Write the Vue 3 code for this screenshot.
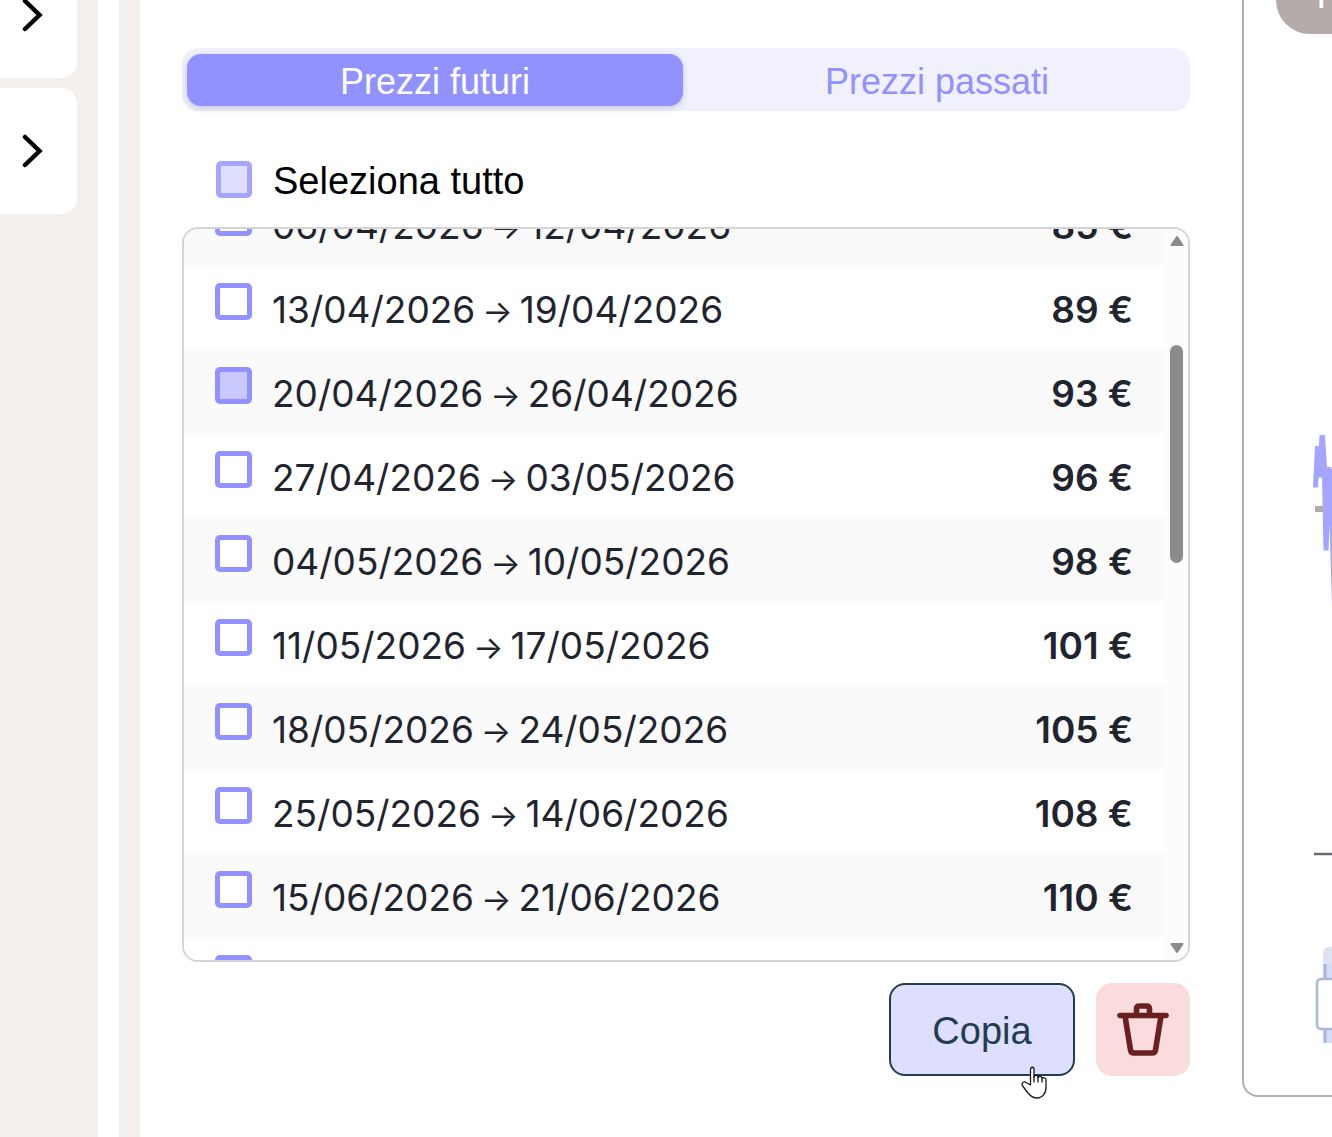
<script setup>
import { onMounted, ref } from 'vue'

const scroller = ref(null)
const rows = ref([
  { from: '06/04/2026', to: '12/04/2026', price: 85, picked: false },
  { from: '13/04/2026', to: '19/04/2026', price: 89, picked: false },
  { from: '20/04/2026', to: '26/04/2026', price: 93, picked: true },
  { from: '27/04/2026', to: '03/05/2026', price: 96, picked: false },
  { from: '04/05/2026', to: '10/05/2026', price: 98, picked: false },
  { from: '11/05/2026', to: '17/05/2026', price: 101, picked: false },
  { from: '18/05/2026', to: '24/05/2026', price: 105, picked: false },
  { from: '25/05/2026', to: '14/06/2026', price: 108, picked: false },
  { from: '15/06/2026', to: '21/06/2026', price: 110, picked: false },
  { from: '22/06/2026', to: '28/06/2026', price: 112, picked: false },
])

onMounted(() => {
  scroller.value.scrollTop = 48
})
</script>

<template>
  <div class="page">
    <nav class="sidebar" aria-label="Sezioni">
      <button v-for="n in 2" :key="n" class="side-card" type="button" aria-label="Apri">
        <svg width="22" height="34" viewBox="0 0 22 34" fill="none" stroke="#000" stroke-width="4.500" stroke-linecap="round">
          <path d="M3 3 L17.500 17 L3 31" />
        </svg>
      </button>
    </nav>
    <div class="rail"></div>

    <main class="main">
      <div class="tabs" role="tablist">
        <button class="tab active" type="button" role="tab" aria-selected="true">Prezzi futuri</button>
        <button class="tab" type="button" role="tab" aria-selected="false">Prezzi passati</button>
      </div>

      <label class="select-all">
        <input class="box soft" type="checkbox" />
        <span>Seleziona tutto</span>
      </label>

      <div class="list">
        <div ref="scroller" class="scroller">
          <table class="prices">
            <tbody>
              <tr v-for="(row, i) in rows" :key="row.from">
                <td class="pick">
                  <input :id="`week-${i}`" v-model="row.picked" class="box" type="checkbox" />
                </td>
                <td>
                  <label class="week" :for="`week-${i}`">
                    <span>{{ row.from }}</span>
                    <span class="arrow">→</span>
                    <span>{{ row.to }}</span>
                  </label>
                </td>
                <td class="price">{{ row.price }} €</td>
              </tr>
            </tbody>
          </table>
        </div>
        <div class="scrollbar" aria-hidden="true">
          <svg width="16" height="12" viewBox="0 0 16 12"><path d="M8 2 L13.500 10 H2.500 Z" fill="#8b8b8b" stroke="#8b8b8b" stroke-width="2" stroke-linejoin="round" /></svg>
          <div class="track"><div class="thumb"></div></div>
          <svg width="16" height="12" viewBox="0 0 16 12"><path d="M8 10 L13.500 2 H2.500 Z" fill="#8b8b8b" stroke="#8b8b8b" stroke-width="2" stroke-linejoin="round" /></svg>
        </div>
      </div>

      <div class="actions">
        <button class="copy" type="button">
          Copia
          <svg class="pointer" width="26" height="34" viewBox="0 0 26 34" fill="#fff" stroke="#15151f" stroke-width="1.300" stroke-linejoin="round" stroke-linecap="round">
            <path d="M9.500 19 V3.500 C9.500 .5 13 .5 13 3.500 V11 C14 8.500 17 9 17 11.500 C18 9.500 21 10 21 12.500 C22 11 25 11.500 25 14 V21 C25 28 21 32 16 32 C12 32 9.500 30 7 27 L2 20.500 C-.5 17 3 15 5 16.500 Z" />
            <path d="M13 11 V16 M17 11.500 V16 M21 12.500 V16" fill="none" />
          </svg>
        </button>
        <button class="delete" type="button" aria-label="Elimina">
          <svg width="54" height="54" viewBox="0 0 54 54" fill="none" stroke="#6b2020" stroke-width="5.600" stroke-linecap="round" stroke-linejoin="round">
            <path d="M4 12.500 H50" />
            <path d="M20.500 12.500 V6 Q20.500 3 23.500 3 H30.500 Q33.500 3 33.500 6 V12.500" />
            <path d="M9 13 L14.500 47 Q15 50 18 50 H36 Q39 50 39.500 47 L45 13" />
          </svg>
        </button>
      </div>
    </main>

    <aside class="chart-card">
      <div class="badge">I</div>
      <svg class="chart" width="88" height="660" viewBox="0 0 88 660" fill="none" aria-hidden="true">
        <path d="M71 109 H88" stroke="#b3aba8" stroke-width="6" />
        <path d="M69 87.500 L71 46 H75 L75.500 35 H81 L83 67 H87 L88 70 V206 L85.500 124 L84.500 150.500 H79.500 L78 77.500 H74.500 L74 87.500 Z" fill="#a5a4ff" />
        <path d="M70 454 H88" stroke="#6c6a75" stroke-width="2.500" />
        <path d="M79 564 V553 Q79 547 85 547 H88 V564 Z" fill="#dde3f2" />
        <path d="M79 564 H88 V643 H79 Z" fill="#d3ddf8" />
        <path d="M81 564 V643" stroke="#a9b8d8" stroke-width="3" />
        <rect x="73" y="579" width="18" height="50" rx="4" fill="#fff" stroke="#a9b8d8" stroke-width="2.500" />
      </svg>
    </aside>
  </div>
</template>

<style>
body {
  margin: 0;
  background: #fff;
}
</style>

<style scoped>
.page {
  display: flex;
  align-items: stretch;
  min-height: 100vh;
  overflow: hidden;
  font-family: "Liberation Sans", Arial, sans-serif;
  font-size: 38px;
  color: #000;
}
button {
  box-sizing: border-box;
  font: inherit;
  border: 0;
  padding: 0;
  cursor: pointer;
}
.sidebar {
  width: 98px;
  flex: none;
  display: flex;
  flex-direction: column;
  gap: 10px;
  margin-top: -48px;
  background: #f4f0ed;
}
.side-card {
  display: flex;
  align-items: center;
  justify-content: flex-end;
  width: 77px;
  height: 126px;
  padding-right: 33px;
  border-radius: 0 16px 16px 0;
  background: #fff;
}
.side-card svg {
  flex: none;
}
.rail {
  width: 21px;
  flex: none;
  margin-left: 21px;
  background: #f4f0ed;
}
.main {
  flex: 1;
  min-width: 0;
  padding: 48px 52px 40px 42px;
}
.tabs {
  display: grid;
  grid-template-columns: 1fr 1fr;
  gap: 6px;
  padding: 6px 5px 5px;
  border-radius: 16px;
  background: #f1f1fe;
}
.tab {
  height: 52px;
  padding-top: 4px;
  border-radius: 14px;
  background: transparent;
  color: #9391ff;
  font-size: 36px;
  line-height: 48px;
}
.tab.active {
  background: #9191ff;
  color: #fff;
  box-shadow: 0 2px 6px rgba(60, 60, 100, 0.25);
}
.select-all {
  display: flex;
  align-items: flex-start;
  gap: 21px;
  margin: 50px 0 26px 34px;
  line-height: 40px;
}
.box {
  appearance: none;
  display: block;
  box-sizing: border-box;
  flex: none;
  width: 37px;
  height: 37px;
  margin: 0;
  border: 5px solid #9391ff;
  border-radius: 5px;
  background: #fff;
}
.box:checked {
  background: #c9c8ff;
}
.box.soft {
  width: 36px;
  border-color: #a5a4ff;
  background: #dedeff;
}
.list {
  display: flex;
  height: 731px;
  overflow: hidden;
  border: 2px solid #d3d3d8;
  border-radius: 16px;
}
.scroller {
  flex: 1;
  overflow-y: auto;
  scrollbar-width: none;
}
.prices {
  width: 100%;
  border-collapse: collapse;
  font-family: Inter, sans-serif;
  font-size: 37px;
  color: #1f242e;
}
.prices tr {
  height: 84px;
  background: #fff;
}
.prices tr:nth-child(odd) {
  background: #fafafa;
}
.prices td {
  padding: 4px 0 0;
}
.prices .pick {
  width: 88px;
  padding: 18px 0 0 31px;
  box-sizing: border-box;
  vertical-align: top;
}
.week {
  display: flex;
  align-items: baseline;
  gap: 7px;
}
.arrow {
  font-size: 32px;
}
.prices .price {
  padding-right: 32px;
  text-align: right;
  font-weight: 600;
}
.scrollbar {
  display: flex;
  flex-direction: column;
  align-items: center;
  justify-content: space-between;
  width: 23px;
  padding: 6px 0;
  box-sizing: border-box;
  background: #fcfcfc;
}
.track {
  flex: 1;
  padding-top: 98px;
}
.thumb {
  width: 13px;
  height: 218px;
  border-radius: 7px;
  background: #8b8b8b;
}
.actions {
  display: flex;
  justify-content: flex-end;
  gap: 21px;
  margin-top: 21px;
}
.copy {
  position: relative;
  width: 186px;
  height: 93px;
  padding-top: 4px;
  border: 2px solid #243c50;
  border-radius: 16px;
  background: #dedeff;
  color: #243c50;
}
.pointer {
  position: absolute;
  right: 26px;
  bottom: -26px;
}
.delete {
  display: flex;
  align-items: center;
  justify-content: center;
  width: 94px;
  height: 93px;
  border-radius: 16px;
  background: #fadcdc;
}
.chart-card {
  flex: none;
  align-self: flex-start;
  box-sizing: border-box;
  width: 90px;
  padding-bottom: 35px;
  overflow: hidden;
  border: solid #abb2ba;
  border-width: 0 0 2px 2px;
  border-radius: 0 0 0 16px;
}
.badge {
  width: 120px;
  height: 68px;
  margin: -34px 0 366px 32px;
  border-radius: 34px;
  background: #b3aba8;
  color: #fff;
  line-height: 58px;
  text-indent: 40px;
}
.chart {
  display: block;
}
</style>
